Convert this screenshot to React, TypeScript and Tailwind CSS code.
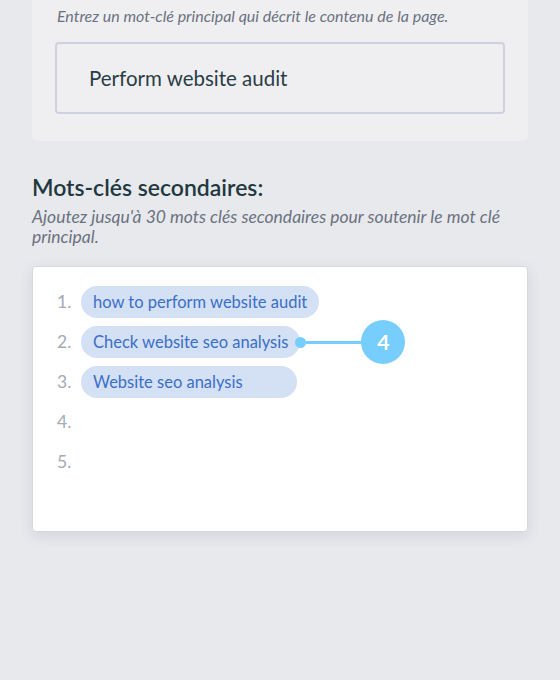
const keywords = [
  "how to perform website audit",
  "Check website seo analysis",
  "Website seo analysis",
  "",
  "",
];

export default function App() {
  return (
    <div
      className="min-h-[680px] w-[560px] bg-[#e8e9ed] px-8"
      style={{ fontFamily: "Lato, 'Open Sans', sans-serif" }}
    >
      <div className="rounded-b-md bg-[#efeff2] px-[23px] pb-[27px] pt-[6px]">
        <p className="pl-[2px] text-[16px] italic leading-5 text-[#6b7280]">
          Entrez un mot-clé principal qui décrit le contenu de la page.
        </p>
        <div className="mt-4 flex h-[72px] items-center rounded-[4px] border-2 border-[#cfd2dd] px-[32px]">
          <span className="text-[20.5px] text-[#2b3d44]">Perform website audit</span>
        </div>
      </div>

      <h2 className="mt-[30px] text-[23px] font-semibold leading-8 text-[#22383f]">
        Mots-clés secondaires:
      </h2>
      <p className="mt-[4px] text-[17.5px] italic leading-5 text-[#6b7280]">
        Ajoutez jusqu'à 30 mots clés secondaires pour soutenir le mot clé principal.
      </p>

      <div className="mt-[19px] h-[266px] rounded-[4px] border border-[#d6d8e1] bg-white px-6 pt-[19px] shadow-[0_4px_14px_rgba(60,65,90,0.12)]">
        <ol className="flex flex-col gap-2">
          {keywords.map((kw, i) => (
            <li key={i} className="flex h-8 items-center">
              <span className="w-6 text-[17.5px] text-[#a4aab6]">{i + 1}.</span>
              {kw && (
                <span className="relative flex h-8 min-w-[216px] items-center rounded-full bg-[#d4e0f4] px-3 text-[16.5px] text-[#3a6fc7]">
                  {kw}
                  {i === 1 && (
                    <span className="absolute left-full top-1/2 flex -translate-y-1/2 items-center">
                      <span className="-ml-[5px] h-[11px] w-[11px] rounded-full bg-[#77cefd]" />
                      <span className="h-[3px] w-[55px] bg-[#77cefd]" />
                      <span className="flex h-11 w-11 items-center justify-center rounded-full bg-[#77cefd] text-[21px] font-bold text-white">
                        4
                      </span>
                    </span>
                  )}
                </span>
              )}
            </li>
          ))}
        </ol>
      </div>
    </div>
  );
}
